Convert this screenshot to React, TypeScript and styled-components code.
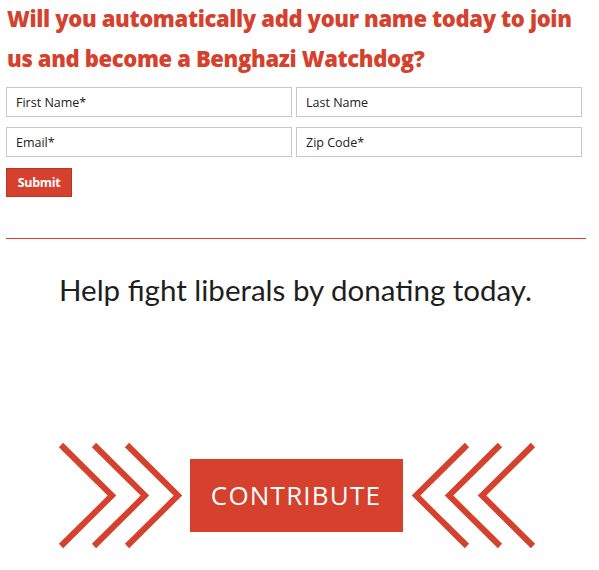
import React from "react";
import styled, { createGlobalStyle } from "styled-components";

const RED = "#d5412d";

const Global = createGlobalStyle`
  html, body { margin: 0; padding: 0; background: #fff; }
  body { font-family: "Open Sans", "Liberation Sans", sans-serif; }
  * { box-sizing: border-box; }
`;

const Page = styled.div`
  width: 599px;
  padding: 0 6px;
`;

const Heading = styled.h2`
  margin: -2px 0 0 1px;
  font-family: "Open Sans", sans-serif;
  font-weight: 800;
  font-size: 22px;
  line-height: 40px;
  color: ${RED};
  letter-spacing: -0.35px;
`;

const Form = styled.form`
  margin-top: 9px;
  display: flex;
  flex-direction: column;
`;

const Grid = styled.div`
  display: grid;
  grid-template-columns: 286px 286px;
  column-gap: 4px;
  row-gap: 10px;
`;

const Field = styled.input`
  height: 30px;
  border: 1px solid #c9c9c9;
  padding: 0 9px;
  font-family: "Open Sans", sans-serif;
  font-size: 12.5px;
  color: #222;
  background: #fff;
  outline: none;
  &::placeholder { color: #222; opacity: 1; }
`;

const SubmitButton = styled.button`
  margin-top: 11px;
  width: 66px;
  height: 29px;
  background: ${RED};
  border: 1px solid #b93624;
  color: #fff;
  font-family: "Open Sans", sans-serif;
  font-weight: 700;
  font-size: 12.5px;
  letter-spacing: -0.3px;
  padding: 0;
  cursor: pointer;
`;

const Divider = styled.hr`
  margin: 41px 0 0 0;
  width: 580px;
  height: 0;
  border: 0;
  border-top: 1px solid ${RED};
`;

const Tagline = styled.p`
  margin: 31px 0 0 0;
  text-align: center;
  font-family: "Lato", sans-serif;
  font-size: 29.5px;
  line-height: 40px;
  color: #1e1e1e;
  padding-right: 8px;
`;

const CtaRow = styled.div`
  margin-top: 130px;
  display: flex;
  align-items: center;
  justify-content: center;
  gap: 5px;
  padding-right: 6px;
`;

const ContributeButton = styled.a`
  width: 213px;
  height: 73px;
  display: flex;
  align-items: center;
  justify-content: center;
  background: ${RED};
  color: #fff;
  font-family: "Open Sans", sans-serif;
  font-weight: 400;
  font-size: 26px;
  letter-spacing: 1.2px;
  text-decoration: none;
  margin-right: 1px;
`;

const Chevrons: React.FC<{ flip?: boolean }> = ({ flip }) => (
  <svg width="130" height="110" viewBox="0 0 130 110" style={flip ? { transform: "scaleX(-1)" } : undefined}>
    {[0, 33, 66].map((dx) => (
      <polyline
        key={dx}
        points={`${6 + dx},5 ${57 + dx},55.5 ${6 + dx},106`}
        fill="none"
        stroke={RED}
        strokeWidth={6}
        strokeLinejoin="miter"
        strokeMiterlimit={4}
      />
    ))}
  </svg>
);

export default function App() {
  return (
    <Page>
      <Global />
      <Heading>
        Will you automatically add your name today to join us and become a Benghazi Watchdog?
      </Heading>
      <Form onSubmit={(e) => e.preventDefault()}>
        <Grid>
          <Field placeholder="First Name*" />
          <Field placeholder="Last Name" />
          <Field placeholder="Email*" />
          <Field placeholder="Zip Code*" />
        </Grid>
        <SubmitButton type="submit">Submit</SubmitButton>
      </Form>
      <Divider />
      <Tagline>Help fight liberals by donating today.</Tagline>
      <CtaRow>
        <Chevrons />
        <ContributeButton href="#">CONTRIBUTE</ContributeButton>
        <Chevrons flip />
      </CtaRow>
    </Page>
  );
}
